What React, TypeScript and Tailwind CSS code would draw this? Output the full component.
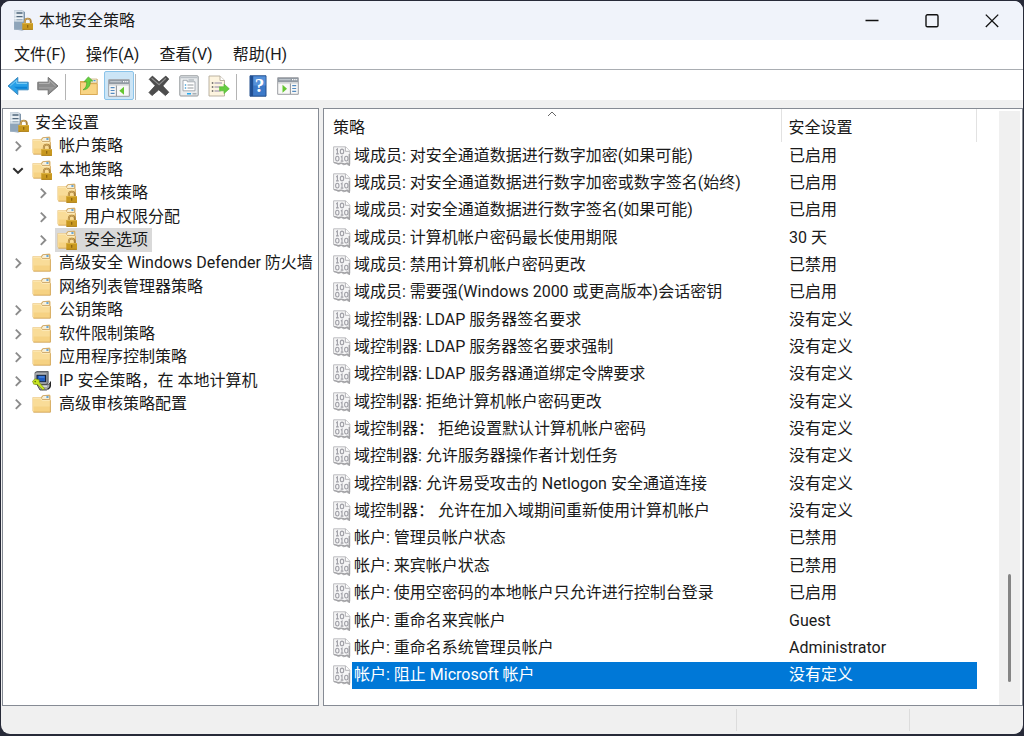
import type { ReactNode } from "react";

type TreeItem = {
  label: string;
  level: 0 | 1 | 2;
  icon: "server" | "locked" | "folder" | "ipsec";
  state?: "open" | "closed";
  selected?: boolean;
};

const tree: TreeItem[] = [
  { label: "安全设置", level: 0, icon: "server" },
  { label: "帐户策略", level: 1, icon: "locked", state: "closed" },
  { label: "本地策略", level: 1, icon: "locked", state: "open" },
  { label: "审核策略", level: 2, icon: "locked", state: "closed" },
  { label: "用户权限分配", level: 2, icon: "locked", state: "closed" },
  { label: "安全选项", level: 2, icon: "locked", state: "closed", selected: true },
  { label: "高级安全 Windows Defender 防火墙", level: 1, icon: "folder", state: "closed" },
  { label: "网络列表管理器策略", level: 1, icon: "folder" },
  { label: "公钥策略", level: 1, icon: "folder", state: "closed" },
  { label: "软件限制策略", level: 1, icon: "folder", state: "closed" },
  { label: "应用程序控制策略", level: 1, icon: "folder", state: "closed" },
  { label: "IP 安全策略，在 本地计算机", level: 1, icon: "ipsec", state: "closed" },
  { label: "高级审核策略配置", level: 1, icon: "folder", state: "closed" },
];

const policies: [string, string][] = [
  ["域成员: 对安全通道数据进行数字加密(如果可能)", "已启用"],
  ["域成员: 对安全通道数据进行数字加密或数字签名(始终)", "已启用"],
  ["域成员: 对安全通道数据进行数字签名(如果可能)", "已启用"],
  ["域成员: 计算机帐户密码最长使用期限", "30 天"],
  ["域成员: 禁用计算机帐户密码更改", "已禁用"],
  ["域成员: 需要强(Windows 2000 或更高版本)会话密钥", "已启用"],
  ["域控制器: LDAP 服务器签名要求", "没有定义"],
  ["域控制器: LDAP 服务器签名要求强制", "没有定义"],
  ["域控制器: LDAP 服务器通道绑定令牌要求", "没有定义"],
  ["域控制器: 拒绝计算机帐户密码更改", "没有定义"],
  ["域控制器： 拒绝设置默认计算机帐户密码", "没有定义"],
  ["域控制器: 允许服务器操作者计划任务", "没有定义"],
  ["域控制器: 允许易受攻击的 Netlogon 安全通道连接", "没有定义"],
  ["域控制器： 允许在加入域期间重新使用计算机帐户", "没有定义"],
  ["帐户: 管理员帐户状态", "已禁用"],
  ["帐户: 来宾帐户状态", "已禁用"],
  ["帐户: 使用空密码的本地帐户只允许进行控制台登录", "已启用"],
  ["帐户: 重命名来宾帐户", "Guest"],
  ["帐户: 重命名系统管理员帐户", "Administrator"],
  ["帐户: 阻止 Microsoft 帐户", "没有定义"],
];

function Lock() {
  return (
    <g>
      <path d="M11.8 14v-2.4a3 3 0 0 1 6 0V14" fill="none" stroke="#a9803a" strokeWidth="1.9" />
      <path d="M11.6 13.6v-2a3.1 3.1 0 0 1 5.6-1.7" fill="none" stroke="#dfba70" strokeWidth="0.7" />
      <rect x="9.3" y="13" width="10.7" height="6.8" rx="0.5" fill="#c8981f" />
      <path d="M9.5 19.4h10.3" stroke="#a67812" strokeWidth="0.8" />
      <path d="M9.6 13.6h10" stroke="#dfb544" strokeWidth="0.9" />
      <path d="M14.7 15v2.8" stroke="#8a620f" strokeWidth="1.2" />
    </g>
  );
}

function ServerIcon() {
  return (
    <svg aria-hidden="true" viewBox="0 0 20 21" className="h-[21px] w-5 shrink-0">
      <path d="M1 .8 9 .4 12 2v17.5L9 20.5 1 19.5z" fill="#7f95aa" />
      <path d="M1 .8h9.5v19.4L1 19.5z" fill="#a3b6c7" />
      <path d="M1.2 .8h9.2v10.6H1.2z" fill="#d7e0e8" />
      <path d="M3.5 3h6M3.5 6.6h6" stroke="#53687c" strokeWidth="1.3" />
      <path d="M3.5 9.8h6" stroke="#8fa3b5" strokeWidth="1.1" />
      <path d="M1.4 5h8.9M1.4 8.3h8.9" stroke="#f6f9fb" strokeWidth="1" />
      <path d="M1.2 12h9v7.6l-9-.8z" fill="#8fa5ba" />
      <Lock />
    </svg>
  );
}

function FolderIcon({ locked }: { locked?: boolean }) {
  return (
    <svg aria-hidden="true" viewBox="0 0 20 20" className="size-5 shrink-0">
      <path d="M.5 3.2h8.3l1.8-2 7-.6.9 1.2v16.4H1.8L.5 17z" fill="#e6c079" />
      <path d="M9.4 3.9 11.2 1.5h6.4v4H10z" fill="#f8edcf" stroke="#c9a263" strokeWidth="0.8" />
      <path d="M12.6 3h2.2" stroke="#eef6fc" strokeWidth="1.4" />
      <path d="M14.4 3h2.1" stroke="#3b8fd6" strokeWidth="1.5" />
      <path d="M.9 3.7h7.9l1.7 2.3h7.7v12H1.9L.9 16.8z" fill="#f9dc98" />
      <path d="M1.2 4.2h7.3l1.7 2.4h7.6" fill="none" stroke="#fdebbd" strokeWidth="0.9" />
      <path d="M1.6 12.5h16.5V18H2z" fill="#f6d283" />
      <path d="M1.4 18.2h17V6.2" fill="none" stroke="#cf9f4d" strokeWidth="0.8" />
      {locked && <Lock />}
    </svg>
  );
}

function IpsecIcon() {
  return (
    <svg aria-hidden="true" viewBox="0 0 20 20" className="size-5 shrink-0">
      <path d="M3 1.6 5 .5h11.2v11.3L15 13H3z" fill="#85898f" stroke="#4a4d52" strokeWidth="0.8" />
      <path d="M3.4 2.2h11v10.4h-11z" fill="#b9bcbf" />
      <path d="M5 4.2h8.6v6.5H5z" fill="#1e5bc0" stroke="#101c33" strokeWidth="1.1" />
      <path d="M7 6h5.5" stroke="#5f9cf0" strokeWidth="1" />
      <path d="M5 13.6h10.4l2.6-1.2v3.7L14.5 19H8z" fill="#a4a7aa" stroke="#2b2b2b" strokeWidth="0.8" />
      <path d="M9 15.2h6" stroke="#eee" strokeWidth="1" />
      <path d="M18.4 10.5v4.2c0 1.6-1 2.7-2.6 3.6" fill="none" stroke="#222" strokeWidth="1.2" />
      <path d="M.5 10.2 3 7.8l4 .9.5 3 5 5.8-1.5 1.6-5.6-5.5-3.7-.4z" fill="#c7e422" stroke="#71840f" strokeWidth="0.6" />
      <circle cx="3.2" cy="10.6" r="0.8" fill="#5d6f0b" />
    </svg>
  );
}

function PolicyIcon() {
  return (
    <svg aria-hidden="true" viewBox="0 0 18 20" className="block h-5 w-[18px]">
      <path d="M.6 .8h12l4.2 4.4v13.2l-1.6.9-1.8-1.6-2.6 1.2-2.6-1.4-2.6 1-2.4-1.4-2.6-.6z" fill="#f5f5f6" stroke="#bdbdc0" />
      <path d="M12.4 .9v4.4h4.2" fill="#fff" stroke="#adadb0" strokeWidth="0.9" />
      <path d="M1 16.8c1.8-.8 3 1.4 4.8.8s2.6-1 4.4 0 2.8.4 4-.4l2.1 1.8V8" fill="none" stroke="#a2a2a5" strokeWidth="1.4" />
      <g fill="none" stroke="#a0a0a7" strokeWidth="1.1">
        <path d="M3.2 4 4.4 3v4.8M3 7.9h2.8M7.8 11.1 9 10.1V15M7.7 15.1h2.7" />
        <ellipse cx="9" cy="5.4" rx="1.7" ry="2.3" />
        <ellipse cx="4.3" cy="12.6" rx="1.7" ry="2.4" />
        <ellipse cx="13.3" cy="12.6" rx="1.7" ry="2.4" />
      </g>
    </svg>
  );
}

function ArrowIcon({ forward }: { forward?: boolean }) {
  return forward ? (
    <svg aria-hidden="true" viewBox="0 0 22 20" className="h-5 w-[22px]">
      <path d="M.8 6.2h10.4V1.4L21 10l-9.8 8.6v-4.8H.8z" fill="#8c8c8c" stroke="#747474" />
      <path d="M2 7.4h10.3V4.2L18.6 10" fill="none" stroke="#b5b5b5" />
      <path d="M2 11h16l-5.6 4.7v-3H2z" fill="#9b9b9b" />
    </svg>
  ) : (
    <svg aria-hidden="true" viewBox="0 0 22 20" className="h-5 w-[22px]">
      <path d="M21.2 6.2H10.8V1.4L1 10l9.8 8.6v-4.8h10.4z" fill="#28a0e8" stroke="#3b88bd" />
      <path d="M20 7.4H9.7V4.2L3.2 10" fill="none" stroke="#7fd0f8" />
      <path d="M20 10.8H7l3 2h10z" fill="#0b82d4" />
    </svg>
  );
}

function UpFolderIcon() {
  return (
    <svg aria-hidden="true" viewBox="0 0 20 20" className="size-5">
      <path d="M1 5h6l2-2h9.5v16H1z" fill="#dcae56" />
      <path d="M11 3h7v4h-7z" fill="#f5eed9" stroke="#c6a66d" strokeWidth="0.7" />
      <path d="M14.5 4.6h2" stroke="#4b9bd8" strokeWidth="1.2" />
      <path d="M1.5 6.2h7.2l1.5 1.5h8v10.8H1.5z" fill="#f8d484" stroke="#d5a54f" strokeWidth="0.8" />
      <path d="M4 13.8C7.2 12 8 9 7.6 5.6H5.2L9.4 .9l4.4 4.2h-2.6c.3 5-2.3 8.4-7.2 8.7z" fill="#66cf3f" stroke="#49a82a" strokeWidth="0.7" />
    </svg>
  );
}

function PaneIcon({ action }: { action?: boolean }) {
  return (
    <svg aria-hidden="true" viewBox="0 0 22 18" className="h-[18px] w-[22px]">
      <path d="M.7 .7h20.6v16.6H.7z" fill="#f8f8f7" stroke="#9a9da2" />
      <path d="M1 1h20v4.2H1z" fill="#929aa3" />
      <path d="M2.2 2.7h11.5" stroke="#c9cfd5" />
      <path d="M15 2.7h1.3M17.2 2.7h1.3M19.2 2.7h1" stroke="#fff" strokeWidth="1.2" />
      <path d="M1 6h20" stroke="#c6c9cc" />
      {action ? (
        <>
          <path d="M13.4 6.5V17" stroke="#8c9196" />
          <path d="M15.2 8.7h4M15.2 11.5h4M15.2 14.3h4" stroke="#548bc0" strokeWidth="1.2" />
          <path d="m5.5 7.7 4.5 4-4.5 4z" fill="#64c631" />
        </>
      ) : (
        <>
          <path d="M8.4 6.5V17" stroke="#8c9196" />
          <path d="M2.6 8.7h4M2.6 11.5h4M2.6 14.3h4" stroke="#548bc0" strokeWidth="1.2" />
          <path d="m16 7.7-4.7 4 4.7 4z" fill="#64c631" />
        </>
      )}
    </svg>
  );
}

function DeleteIcon() {
  return (
    <svg aria-hidden="true" viewBox="0 0 22 22" className="size-[22px]">
      <path d="M4.4 1.1 11 6.9l6.8-5.8 3 3-6 6.8 6 6.4-3.4 3.3-6.6-5.8-6.8 5.8-3-3.1 6.2-6.8-6-6.4z" fill="#4d4d4d" stroke="#404040" strokeWidth="0.8" />
      <path d="m3.6 3.3 7.5 6.4 6.8-6.4" fill="none" stroke="#8b8b8b" strokeWidth="1.2" />
    </svg>
  );
}

function PropertiesIcon() {
  return (
    <svg aria-hidden="true" viewBox="0 0 20 22" className="h-[22px] w-5">
      <rect x="0.8" y="0.8" width="18.4" height="20.2" rx="1" fill="#e9ecee" stroke="#92979b" />
      <path d="M1.5 2.6h17" stroke="#bac0c6" strokeWidth="1.2" />
      <path d="M4 5.3h4.2v1.5H16v9H4z" fill="#fff" stroke="#939ba2" strokeWidth="0.8" />
      <path d="M9.5 5h5.5" stroke="#9ba4ab" />
      <path d="M5.8 10h1.4M5.8 13h1.4" stroke="#4ba3d9" strokeWidth="1.4" />
      <path d="M8.5 10h6M8.5 13h6" stroke="#93999d" />
      <path d="M8 18.8h4" stroke="#21a8ef" strokeWidth="1.6" />
      <path d="M13.5 18.8h4" stroke="#a8afb5" strokeWidth="1.6" />
    </svg>
  );
}

function ExportIcon() {
  return (
    <svg aria-hidden="true" viewBox="0 0 22 22" className="size-[22px]">
      <path d="M1 1h11l4.5 4.3V21H1z" fill="#fdf4df" stroke="#b3aa9a" strokeWidth="0.9" />
      <path d="M12 1v4.5h4.5" fill="#fff" stroke="#b3aa9a" strokeWidth="0.9" />
      <path d="M3.8 8h1.5M3.8 12h1.5M3.8 16h1.5" stroke="#555" strokeWidth="1.3" />
      <path d="M6.5 8H14M6.5 12H12M6.5 16h6" stroke="#8e86a7" />
      <path d="M11.6 11.8h4.4V9l5.3 4.8-5.3 4.8v-2.8h-4.4z" fill="#64cc3e" stroke="#58b93a" strokeWidth="0.7" />
    </svg>
  );
}

function HelpIcon() {
  return (
    <svg aria-hidden="true" viewBox="0 0 18 22" className="h-[22px] w-[18px]">
      <path d="M1 .8h16v20.4H1z" fill="#3c79c8" stroke="#234f8c" />
      <path d="M1.2 1h2.9v20H1.2z" fill="#204e91" />
      <path d="M4.5 1.4h12v9H4.5z" fill="#5590d8" />
      <text x="10.5" y="17" textAnchor="middle" fontSize="19" fontWeight="bold" fill="#fff" className="font-['Liberation_Serif',serif]">?</text>
    </svg>
  );
}

function ToolButton({ label, children, active }: { label: string; children: ReactNode; active?: boolean }) {
  return (
    <button
      type="button"
      aria-label={label}
      aria-pressed={active}
      className={`flex h-[29px] w-[30px] shrink-0 items-center justify-center ${active ? "rounded-xs border border-[#8bc4ea] bg-[#cce5f6] pt-1" : ""}`}
    >
      {children}
    </button>
  );
}

function Separator({ space }: { space: string }) {
  return <div className={`h-[26px] w-px shrink-0 bg-[#b4b4b4] ${space}`} />;
}

function Chevron({ state }: { state?: "open" | "closed" }) {
  if (!state) return <span className="w-3 shrink-0" />;
  return (
    <button type="button" aria-label={state === "open" ? "折叠" : "展开"} className="w-3 shrink-0">
      <svg aria-hidden="true" viewBox="0 0 12 12" className="size-3">
        {state === "open" ? (
          <path d="m1.3 4.2 4.7 4.6 4.7-4.6" fill="none" stroke="#303030" strokeWidth="2" />
        ) : (
          <path d="m3.8 1.6 4.6 4.6-4.6 4.6" fill="none" stroke="#8b8b8b" strokeWidth="1.9" />
        )}
      </svg>
    </button>
  );
}

const indents = ["pl-[6px]", "pl-[9px]", "pl-[34px]"];

function TreeRow({ item }: { item: TreeItem }) {
  return (
    <li role="treeitem" aria-selected={!!item.selected} className={`flex min-h-0 items-center ${indents[item.level]}`}>
      {item.level > 0 && <Chevron state={item.state} />}
      <span className={`flex h-full items-center whitespace-nowrap pr-1 ${item.level > 0 ? "ml-[6px] gap-[7px] pl-[2px]" : "gap-[6px]"} ${item.selected ? "bg-[#d9d9d9]" : ""}`}>
        {item.icon === "server" && <ServerIcon />}
        {item.icon === "locked" && <FolderIcon locked />}
        {item.icon === "folder" && <FolderIcon />}
        {item.icon === "ipsec" && <IpsecIcon />}
        {item.label}
      </span>
    </li>
  );
}

export default function App() {
  return (
    <div className="h-screen bg-[#272a38] px-px pt-px pb-[2px] font-['Roboto','Noto_Sans_CJK_SC',sans-serif] text-[16px] leading-5 text-[#1a1a1a]">
      <div className="flex h-full flex-col overflow-hidden rounded-[9px] bg-[#f0f0f0]">
        <header className="flex h-[39px] shrink-0 items-center bg-[#f0f3fa] pr-px pl-3">
          <ServerIcon />
          <h1 className="ml-[6px] flex-1">本地安全策略</h1>
          <button type="button" aria-label="最小化" className="flex h-full w-[60px] items-center justify-center">
            <svg aria-hidden="true" viewBox="0 0 14 14" className="size-[14px]"><path d="M.5 6.5h13" stroke="#111" strokeWidth="1.3" /></svg>
          </button>
          <button type="button" aria-label="最大化" className="flex h-full w-[60px] items-center justify-center">
            <svg aria-hidden="true" viewBox="0 0 14 14" className="size-[14px]"><rect x="1" y="0.8" width="12" height="12" rx="1.4" fill="none" stroke="#111" strokeWidth="1.4" /></svg>
          </button>
          <button type="button" aria-label="关闭" className="flex h-full w-[60px] items-center justify-center">
            <svg aria-hidden="true" viewBox="0 0 14 14" className="size-[14px]"><path d="m.8.6 12.4 12.4M13.2.6.8 13" stroke="#111" strokeWidth="1.3" /></svg>
          </button>
        </header>

        <nav className="flex h-[30px] shrink-0 items-center gap-5 border-b border-[#a9adb2] bg-white pl-[13px]">
          <button type="button">文件(F)</button>
          <button type="button">操作(A)</button>
          <button type="button">查看(V)</button>
          <button type="button">帮助(H)</button>
        </nav>

        <div role="toolbar" aria-label="工具栏" className="flex h-[30px] shrink-0 items-end bg-white pl-[2px]">
          <ToolButton label="后退"><ArrowIcon /></ToolButton>
          <ToolButton label="前进"><ArrowIcon forward /></ToolButton>
          <Separator space="ml-[2px] mr-2" />
          <ToolButton label="上一级"><UpFolderIcon /></ToolButton>
          <ToolButton label="显示/隐藏控制台树" active><PaneIcon /></ToolButton>
          <Separator space="ml-[1px] mr-2" />
          <ToolButton label="删除"><DeleteIcon /></ToolButton>
          <ToolButton label="属性"><PropertiesIcon /></ToolButton>
          <ToolButton label="导出列表"><ExportIcon /></ToolButton>
          <Separator space="ml-[2px] mr-[6px]" />
          <ToolButton label="帮助"><HelpIcon /></ToolButton>
          <ToolButton label="显示/隐藏操作窗格"><PaneIcon action /></ToolButton>
        </div>

        <main className="flex min-h-0 flex-1 gap-1 pt-2 pl-px">
          <aside className="w-[317px] shrink-0 overflow-hidden border border-[#868b94] bg-white pt-[2px]">
            <ul role="tree" aria-label="控制台树" className="grid h-[305px] auto-rows-fr">
              {tree.map((item) => <TreeRow key={item.label} item={item} />)}
            </ul>
          </aside>

          <section className="flex min-w-0 flex-1 overflow-hidden border border-[#868b94] bg-white">
            <div className="min-w-0 flex-1 overflow-hidden pr-[22px]">
              <table className="h-[580px] w-full table-fixed border-collapse text-left">
                <colgroup>
                  <col className="w-[28px]" />
                  <col className="w-[429px]" />
                  <col />
                </colgroup>
                <thead>
                  <tr className="h-[33px]">
                    <th colSpan={2} className="relative border-r border-[#e2e2e2] pt-1 pl-[9px] font-normal">
                      策略
                      <svg aria-hidden="true" viewBox="0 0 10 6" className="absolute top-[2px] left-1/2 h-[6px] w-[10px] -translate-x-1/2"><path d="m1 5 4-4 4 4" fill="none" stroke="#666" /></svg>
                    </th>
                    <th className="border-r border-[#e2e2e2] pt-1 pl-[7px] font-normal">安全设置</th>
                  </tr>
                </thead>
                <tbody>
                  {policies.map(([name, value], index) => {
                    const selected = index === policies.length - 1;
                    return (
                      <tr key={name} aria-selected={selected}>
                        <td className="p-0 pl-[9px]"><PolicyIcon /></td>
                        <td className={`p-0 pl-[2px] whitespace-nowrap ${selected ? "bg-[#0078d7] text-white" : ""}`}>{name}</td>
                        <td className={`p-0 pl-2 whitespace-nowrap ${selected ? "bg-[#0078d7] text-white" : ""}`}>{value}</td>
                      </tr>
                    );
                  })}
                </tbody>
              </table>
            </div>
            <div className="mt-[2px] mr-[2px] flex w-[21px] shrink-0 flex-col items-center justify-end bg-[#f0f0f0] pb-[23px]">
              <div className="h-[108px] w-[3px] rounded-full bg-[#858585]" />
            </div>
          </section>
        </main>

        <footer className="flex h-[28px] shrink-0 py-[3px]">
          <div className="flex-1 border-r border-[#dcdcdc]" />
          <div className="w-[173px] border-r border-[#dcdcdc]" />
          <div className="w-[113px]" />
        </footer>
      </div>
    </div>
  );
}
